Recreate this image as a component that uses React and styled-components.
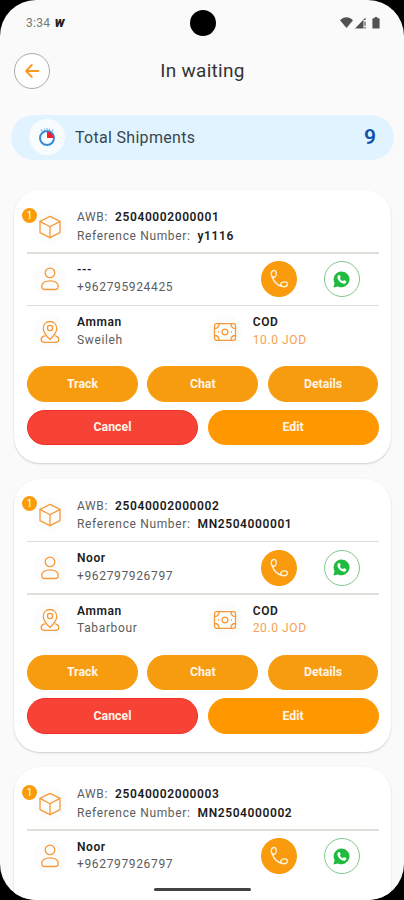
import styled, { createGlobalStyle } from 'styled-components';

const shipments = [
  {
    awb: '25040002000001',
    reference: 'y1116',
    name: '---',
    phone: '+962795924425',
    city: 'Amman',
    area: 'Sweileh',
    cod: '10.0 JOD',
  },
  {
    awb: '25040002000002',
    reference: 'MN2504000001',
    name: 'Noor',
    phone: '+962797926797',
    city: 'Amman',
    area: 'Tabarbour',
    cod: '20.0 JOD',
  },
  {
    awb: '25040002000003',
    reference: 'MN2504000002',
    name: 'Noor',
    phone: '+962797926797',
  },
];

const ArrowIcon = () => (
  <LineIcon width="16" height="16" viewBox="0 0 16 16" strokeWidth="1.8">
    <path d="M14.5 8H2M7.8 2L2 8l5.8 6" />
  </LineIcon>
);

const BoxIcon = () => (
  <LineIcon width="24" height="24" viewBox="0 0 24 24">
    <path d="M12 1.3l10 5.1v11.2l-10 5.1-10-5.1V6.4z" />
    <path d="M2 6.4l10 5.4 10-5.4M12 11.8v10.8" />
  </LineIcon>
);

const PersonIcon = () => (
  <LineIcon width="24" height="24" viewBox="0 0 24 24">
    <circle cx="12" cy="5.9" r="4.8" />
    <path d="M12 13.8c4.7 0 8.300 2.200 8.300 5.400 0 2.400-1.300 3.300-3.200 3.300H6.900c-1.900 0-3.200-.9-3.200-3.300 0-3.200 3.600-5.400 8.300-5.400z" />
  </LineIcon>
);

const LocationIcon = () => (
  <LineIcon width="24" height="24" viewBox="0 0 24 24">
    <path d="M12 19.500c-3.300-3.200-6.700-7-6.700-11.100C5.300 4.200 8.200 1.500 12 1.500s6.700 2.700 6.700 6.900c0 4.100-3.400 7.900-6.700 11.100z" />
    <circle cx="12" cy="8" r="2.600" />
    <path d="M6.500 15.800c-2.300.7-3.300 2.100-3.300 3.500 0 2 1.500 3.100 3.500 3.100h10.600c2 0 3.500-1.100 3.500-3.100 0-1.400-1-2.800-3.300-3.500" />
  </LineIcon>
);

const MoneyIcon = () => (
  <LineIcon width="24" height="24" viewBox="0 0 24 24">
    <rect x="1.500" y="3.700" width="21" height="16.600" rx="2" />
    <circle cx="12" cy="12" r="2.900" />
    <path d="M1.500 8.500c2.800 0 4.500-1.800 4.500-4.800M22.500 8.500c-2.800 0-4.500-1.800-4.500-4.800M1.500 15.500c2.800 0 4.500 1.800 4.500 4.800M22.500 15.500c-2.800 0-4.500 1.800-4.500 4.800M5.500 12h.2M18.300 12h.2" />
  </LineIcon>
);

const PhoneIcon = () => (
  <LineIcon width="20" height="20" viewBox="0 0 20 20" strokeWidth="1.4">
    <path d="M3 7.400C1.400 5 2.300 2.600 4.200 1.700c1.700-.7 2.600.3 3 2.300.4 1.900.2 3-1 3.700-1.200.7-2.500.8-3.200-.3z" />
    <path d="M3 7.400c1.600 4.600 4.900 8.600 9.900 9.900" />
    <path d="M12.900 17.300c-1.300-.5-1.400-1.700-.9-2.900.5-1.100 1.400-1.500 3.500-1.500 2.200 0 3.200.8 3 2.300-.2 1.700-1.700 2.600-3.600 2.500-.7 0-1.400-.1-2-.4z" />
  </LineIcon>
);

const WhatsAppIcon = () => (
  <svg width="17" height="17" viewBox="0 0 17 17">
    <path fill="#20bb3e" d="M8.700.4a7.900 7.900 0 1 1-3.600 15L.4 16.600l1.200-4.500A7.900 7.900 0 0 1 8.700.4z" />
    <path fill="#fff" d="M5.600 4.100c.4-.3 1-.3 1.200.1l.9 1.900c.1.300 0 .5-.8 1.400.7 1.300 1.600 2.100 3 2.700.8-1 1-1.200 1.400-1l1.900.9c.5.300-.1 1.800-.9 2.300-1.300.7-3.400.1-5.200-1.400C5.300 9.500 4.300 7.700 4.400 6.300c.1-.9.600-1.700 1.200-2.200z" />
  </svg>
);

const StopwatchIcon = () => (
  <svg width="20" height="20" viewBox="0 0 20 20" fill="none">
    <circle cx="10" cy="11" r="7" fill="#f5fbff" stroke="#388bd6" strokeWidth="2" />
    <path d="M10 11V4.500a6.500 6.500 0 0 1 6.500 6.500z" fill="#f51f2c" />
    <path d="M10 1v2.500M3.800 2.300l1.500 2M16.200 2.300l-1.500 2M7.300 1.600l.5 1.500M12.700 1.600l-.5 1.500" stroke="#7ab8e8" strokeWidth="1.100" />
  </svg>
);

const StatusIcons = () => (
  <svg width="40" height="14" viewBox="0 0 40 14" fill="#515151">
    <path d="M0 4.200C3.800.3 9.200.3 13 4.200L6.500 12z" />
    <path d="M15 12.500L25.500 1.600V4h-2v8.500z" />
    <path d="M24.400 5.500h1.200v4.200h-1.200zM24.400 11h1.200v1.500h-1.200z" />
    <path d="M33 2.300h1.700V1h2.600v1.300H39c.4 0 .6.200.6.600v9c0 .400-.2.600-.6.600h-6c-.4 0-.6-.2-.6-.6v-9c0-.4.200-.6.600-.6z" />
  </svg>
);

const ShipmentCard = ({ shipment }) => (
  <Card>
    <Row>
      <IconCircle>
        <BoxIcon />
        <CountBadge>1</CountBadge>
      </IconCircle>
      <TextColumn $lineHeight={18.5}>
        <Pair>
          <Label>AWB:</Label>
          <Strong>{shipment.awb}</Strong>
        </Pair>
        <Pair>
          <Label>Reference Number:</Label>
          <Strong>{shipment.reference}</Strong>
        </Pair>
      </TextColumn>
    </Row>
    <Divider />
    <Row>
      <IconCircle>
        <PersonIcon />
      </IconCircle>
      <TextColumn>
        <Strong>{shipment.name}</Strong>
        <Label>{shipment.phone}</Label>
      </TextColumn>
      <Contacts>
        <CallButton aria-label="Call">
          <PhoneIcon />
        </CallButton>
        <WhatsAppButton aria-label="WhatsApp">
          <WhatsAppIcon />
        </WhatsAppButton>
      </Contacts>
    </Row>
    {shipment.city && <DeliveryDetails shipment={shipment} />}
  </Card>
);

const DeliveryDetails = ({ shipment }) => (
  <>
    <Divider />
    <Row>
      <Half>
        <IconCircle>
          <LocationIcon />
        </IconCircle>
        <TextColumn>
          <Strong>{shipment.city}</Strong>
          <Label>{shipment.area}</Label>
        </TextColumn>
      </Half>
      <Half>
        <IconCircle>
          <MoneyIcon />
        </IconCircle>
        <TextColumn>
          <Strong>COD</Strong>
          <Amount>{shipment.cod}</Amount>
        </TextColumn>
      </Half>
    </Row>
    <Actions>
      <ActionRow>
        <ActionButton>Track</ActionButton>
        <ActionButton>Chat</ActionButton>
        <ActionButton>Details</ActionButton>
      </ActionRow>
      <ActionRow>
        <ActionButton $variant="danger">Cancel</ActionButton>
        <ActionButton $variant="edit">Edit</ActionButton>
      </ActionRow>
    </Actions>
  </>
);

const App = () => (
  <>
    <GlobalStyle />
    <Screen>
      <StatusBar>
        <Clock>
          3:34 <Carrier>w</Carrier>
        </Clock>
        <Camera />
        <StatusIcons />
      </StatusBar>
      <Header>
        <BackButton aria-label="Back">
          <ArrowIcon />
        </BackButton>
        <Title>In waiting</Title>
      </Header>
      <Summary>
        <SummaryIcon>
          <StopwatchIcon />
        </SummaryIcon>
        <SummaryLabel>Total Shipments</SummaryLabel>
        <SummaryCount>9</SummaryCount>
      </Summary>
      <List>
        {shipments.map((shipment) => (
          <ShipmentCard key={shipment.awb} shipment={shipment} />
        ))}
      </List>
      <HomeIndicator />
    </Screen>
  </>
);

const GlobalStyle = createGlobalStyle`
  * {
    box-sizing: border-box;
  }

  body {
    margin: 0;
    background: #000;
    font-family: Roboto, 'Liberation Sans', sans-serif;
    overflow: hidden;
  }
`;

const Screen = styled.div`
  position: relative;
  display: flex;
  flex-direction: column;
  width: 404px;
  height: 900px;
  overflow: hidden;
  background: #fafafa;
  border-radius: 36px;
`;

const LineIcon = styled.svg.attrs(({ strokeWidth = 1.3 }) => ({
  fill: 'none',
  stroke: 'currentColor',
  strokeWidth,
  strokeLinecap: 'round',
  strokeLinejoin: 'round',
}))`
  flex: none;
`;

const StatusBar = styled.div`
  display: grid;
  grid-template-columns: 1fr 26px 1fr;
  align-items: center;
  flex: none;
  height: 46px;
  padding: 0 24px 0 26px;

  > svg {
    justify-self: end;
  }
`;

const Clock = styled.div`
  font-size: 12px;
  letter-spacing: 0.3px;
  color: #777;
`;

const Carrier = styled.span`
  margin-left: 1px;
  font-size: 14px;
  line-height: 12px;
  font-style: italic;
  font-weight: 900;
  color: #222;
`;

const Camera = styled.div`
  width: 26px;
  height: 26px;
  border-radius: 50%;
  background: #000;
`;

const Header = styled.header`
  display: grid;
  grid-template-columns: 36px 1fr 36px;
  align-items: center;
  flex: none;
  height: 50px;
  padding: 0 13px 0 14px;
`;

const BackButton = styled.button`
  display: flex;
  align-items: center;
  justify-content: center;
  width: 36px;
  height: 36px;
  padding: 0;
  border: 1px solid #aaa;
  border-radius: 50%;
  background: #fff;
  color: #f99a20;
`;

const Title = styled.h1`
  margin: 0 0 2px;
  text-align: center;
  font-size: 19px;
  font-weight: 400;
  letter-spacing: 0.3px;
  color: #333;
`;

const Summary = styled.section`
  display: flex;
  align-items: center;
  flex: none;
  height: 45px;
  margin: 18.5px 10px 0 11px;
  padding: 0 18px;
  border-radius: 23px;
  background: #e1f3fe;
`;

const SummaryIcon = styled.div`
  display: flex;
  align-items: center;
  justify-content: center;
  width: 36px;
  height: 36px;
  border-radius: 50%;
  background: #f8fcff;
`;

const SummaryLabel = styled.span`
  margin-left: 10px;
  font-size: 16px;
  letter-spacing: 0.3px;
  color: #37474f;
`;

const SummaryCount = styled.span`
  margin-left: auto;
  font-size: 21px;
  font-weight: 600;
  color: #1452a8;
`;

const List = styled.main`
  display: flex;
  flex-direction: column;
  gap: 15.5px;
  padding: 30.5px 13px 0 14px;
`;

const Card = styled.article`
  flex: none;
  min-height: 273px;
  padding: 11px 12.5px 18px 13px;
  border-radius: 26px;
  background: #fff;
  box-shadow: 0 1px 2px rgba(0, 0, 0, 0.18);
`;

const Row = styled.div`
  display: flex;
  align-items: center;
  height: 51px;
`;

const Divider = styled.div`
  height: 1.5px;
  background: #e1deda;
`;

const Half = styled.div`
  display: flex;
  align-items: center;
  flex: 1;
`;

const IconCircle = styled.div`
  position: relative;
  display: flex;
  align-items: center;
  justify-content: center;
  flex: none;
  width: 34px;
  height: 34px;
  margin: 0 10.5px 0 5.5px;
  border-radius: 50%;
  background: #fcfcfc;
  color: #f69a38;
`;

const CountBadge = styled.span`
  position: absolute;
  top: -2px;
  left: -10.5px;
  width: 15px;
  height: 15px;
  border-radius: 50%;
  background: #f99b0c;
  color: #fff;
  font-size: 10px;
  line-height: 15px;
  text-align: center;
`;

const TextColumn = styled.div`
  display: flex;
  flex-direction: column;
  font-size: 12px;
  line-height: ${({ $lineHeight = 17.5 }) => $lineHeight}px;
  letter-spacing: 0.6px;
  white-space: nowrap;
`;

const Pair = styled.div`
  display: flex;
  gap: 7px;
`;

const Label = styled.span`
  letter-spacing: 0.65px;
  color: #5c5c5c;
`;

const Strong = styled.span`
  font-weight: 600;
  color: #1c1c1c;
`;

const Amount = styled.span`
  color: #f6a152;
`;

const Contacts = styled.div`
  display: flex;
  gap: 27px;
  margin-left: auto;
  padding-right: 19px;
`;

const RoundButton = styled.button`
  display: flex;
  align-items: center;
  justify-content: center;
  width: 36px;
  height: 36px;
  padding: 0;
  border: 0;
  border-radius: 50%;
`;

const CallButton = styled(RoundButton)`
  background: #f99b0c;
  color: #fff3df;
`;

const WhatsAppButton = styled(RoundButton)`
  border: 1px solid #7fc58b;
  background: #fff;
`;

const Actions = styled.div`
  display: flex;
  flex-direction: column;
  gap: 8px;
  margin-top: 9px;
`;

const ActionRow = styled.div`
  display: flex;
  gap: 9.5px;
`;

const buttonColors = {
  primary: { fill: '#f79c0e', edge: '#f79c0e' },
  edit: { fill: '#ff9800', edge: '#ff9800' },
  danger: { fill: '#f74336', edge: '#f22d25' },
};

const ActionButton = styled.button`
  flex: 1;
  height: 35.5px;
  padding: 0;
  border: 1px solid ${({ $variant = 'primary' }) => buttonColors[$variant].edge};
  border-radius: 18px;
  background: ${({ $variant = 'primary' }) => buttonColors[$variant].fill};
  color: #fff5e8;
  font-family: inherit;
  font-size: 12.3px;
  font-weight: 700;
`;

const HomeIndicator = styled.div`
  position: absolute;
  bottom: 9px;
  left: 154px;
  width: 97px;
  height: 3px;
  border-radius: 2px;
  background: #424242;
`;

export default App;
